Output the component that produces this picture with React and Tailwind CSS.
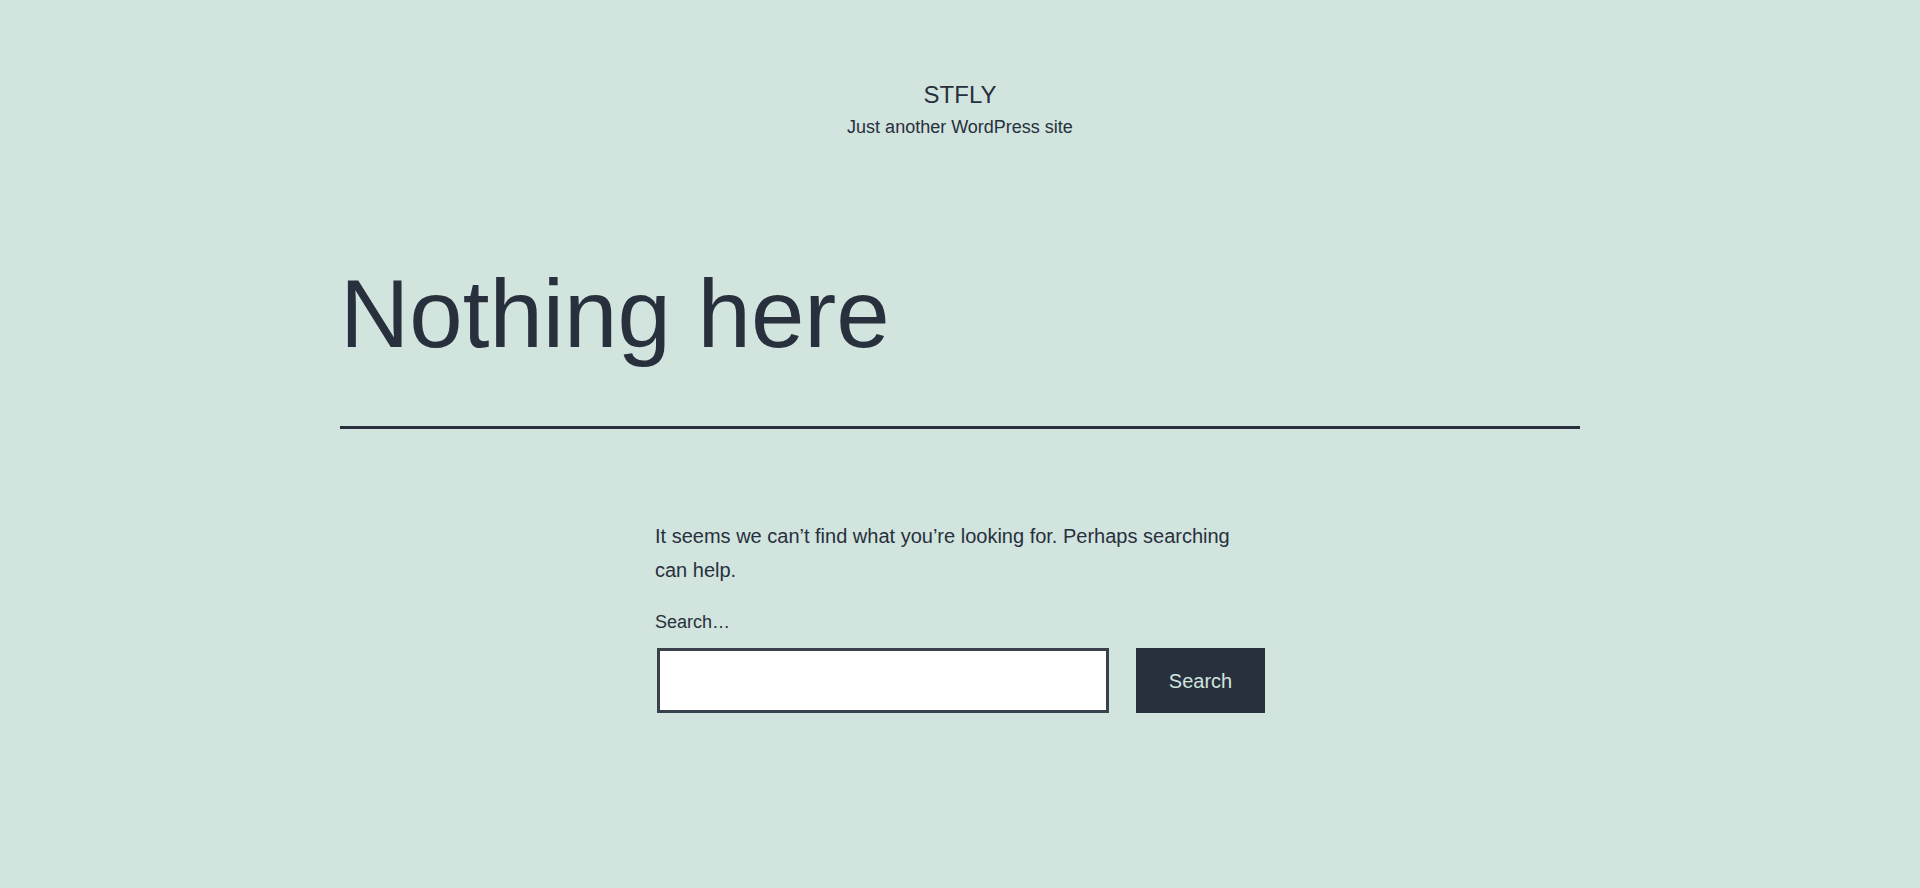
export default function App() {
  return (
    <div className="min-h-[888px] bg-[#d1e4dd] text-[#28303d] font-['Liberation_Sans',Arial,sans-serif]">
      {/* Site header */}
      <header className="pt-[79px] text-center">
        <p className="text-[24px] leading-[32px] uppercase">STFLY</p>
        <p className="mt-[4px] text-[18px] leading-[24px]">Just another WordPress site</p>
      </header>

      <main className="mt-[122px]">
        <div className="mx-auto w-[1240px] border-b-[3px] border-[#28303d] pb-[60px]">
          <h1 className="text-[96px] leading-[105px] font-normal">Nothing here</h1>
        </div>

        <div className="mx-auto mt-[90px] w-[610px]">
          <p className="text-[20px] leading-[34px]">
            It seems we can’t find what you’re looking for. Perhaps searching can help.
          </p>

          <form className="mt-[21px]" onSubmit={(e) => e.preventDefault()}>
            <label htmlFor="search" className="block text-[18px] leading-[28px]">
              Search…
            </label>
            <div className="mt-3 flex items-start">
              <input
                id="search"
                type="search"
                className="ml-[2px] h-[65px] w-[452px] border-[3px] border-[#39414d] bg-white px-4 text-[20px] outline-none"
              />
              <button
                type="submit"
                className="ml-[27px] h-[65px] w-[129px] bg-[#28303d] text-[20px] text-[#d1e4dd]"
              >
                Search
              </button>
            </div>
          </form>
        </div>
      </main>
    </div>
  );
}
